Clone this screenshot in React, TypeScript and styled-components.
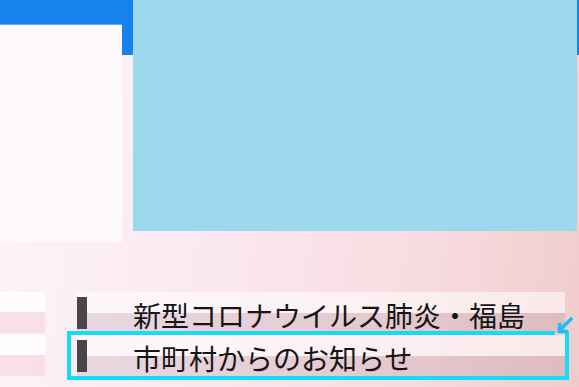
import styled, { createGlobalStyle } from "styled-components";

const GlobalStyles = createGlobalStyle`
  html, body {
    margin: 0;
    padding: 0;
    overflow: hidden;
  }
  body {
    font-family: "Noto Sans CJK JP", "Noto Sans", sans-serif;
  }
`;

const Screen = styled.div`
  width: 579px;
  height: 387px;
  overflow: hidden;
  background: linear-gradient(100deg, #fdf5fa 0%, #fbe8f0 40%, #f7dade 75%, #f0cbcd 100%);
  display: flex;
  flex-direction: column;
`;

// blue band behind the two top panels
const TopArea = styled.div`
  height: 242px;
  display: flex;
  align-items: flex-start;
  gap: 11px;
  background: linear-gradient(to bottom, #1782ec 0 55px, transparent 55px);
`;

const SidePanel = styled.div`
  width: 122px;
  height: 218px;
  margin-top: 24px;
  background: #fdf9fc;
  box-shadow: inset 0 1px 0 #6aa8ee;
`;

const VideoPanel = styled.div`
  width: 444px;
  height: 231px;
  background: #9cd9ec;
`;

const List = styled.div`
  margin-top: 46px;
  display: flex;
  flex-direction: column;
`;

const ListRow = styled.div<{ $first?: boolean }>`
  display: flex;
  align-items: stretch;
  margin-top: ${(p) => (p.$first ? "0" : "-6px")};
`;

const Stub = styled.div`
  width: 45px;
  margin: 4px 0;
  background: linear-gradient(
    to bottom,
    rgba(255, 255, 255, 0.8) 0 48%,
    rgba(240, 190, 210, 0.35) 48% 100%
  );
`;

const Item = styled.div<{ $selected?: boolean }>`
  position: relative;
  width: 502px;
  margin-left: 22px;
  padding-left: 6px;
  box-sizing: border-box;
  border: 4px solid transparent;
  border-top: none;
  padding-top: 4px;
  ${(p) =>
    p.$selected &&
    `
    border-color: #14dcf6;
    border-top: none;
    &::before {
      content: "";
      position: absolute;
      left: -4px;
      right: 10px;
      top: 0;
      height: 4px;
      background: #14dcf6;
    }
  `}
`;

const Strip = styled.div`
  height: 41px;
  display: flex;
  align-items: center;
  background: linear-gradient(
    to bottom,
    rgba(255, 255, 255, 0.55) 0 50%,
    rgba(110, 80, 90, 0.14) 50% 100%
  );
`;

const Marker = styled.div`
  width: 10px;
  height: 32px;
  margin-top: 1px;
  background: #4a4548;
  flex-shrink: 0;
`;

const Label = styled.span`
  margin-left: 46px;
  margin-top: 4px;
  font-size: 28px;
  line-height: 32px;
  color: #161616;
  white-space: nowrap;
`;

const CornerArrow = styled.svg`
  position: absolute;
  right: -8px;
  top: -14px;
  width: 17px;
  height: 18px;
`;

const items = [
  { label: "新型コロナウイルス肺炎・福島", selected: false },
  { label: "市町村からのお知らせ", selected: true },
];

function App() {
  return (
    <>
      <GlobalStyles />
      <Screen>
        <TopArea>
          <SidePanel />
          <VideoPanel />
        </TopArea>
        <List>
          {items.map((it, i) => (
            <ListRow key={it.label} $first={i === 0}>
              <Stub />
              <Item $selected={it.selected}>
                <Strip>
                  <Marker />
                  <Label>{it.label}</Label>
                </Strip>
                {it.selected && (
                  <CornerArrow viewBox="0 0 17 18">
                    <path
                      d="M15 2 L5 12"
                      stroke="#18bef4"
                      strokeWidth="3.5"
                      strokeLinecap="square"
                      fill="none"
                    />
                    <path
                      d="M3.5 6 L3.5 14.5 L12 14.5"
                      stroke="#18bef4"
                      strokeWidth="3.5"
                      fill="none"
                    />
                  </CornerArrow>
                )}
              </Item>
            </ListRow>
          ))}
        </List>
      </Screen>
    </>
  );
}

export default App;
